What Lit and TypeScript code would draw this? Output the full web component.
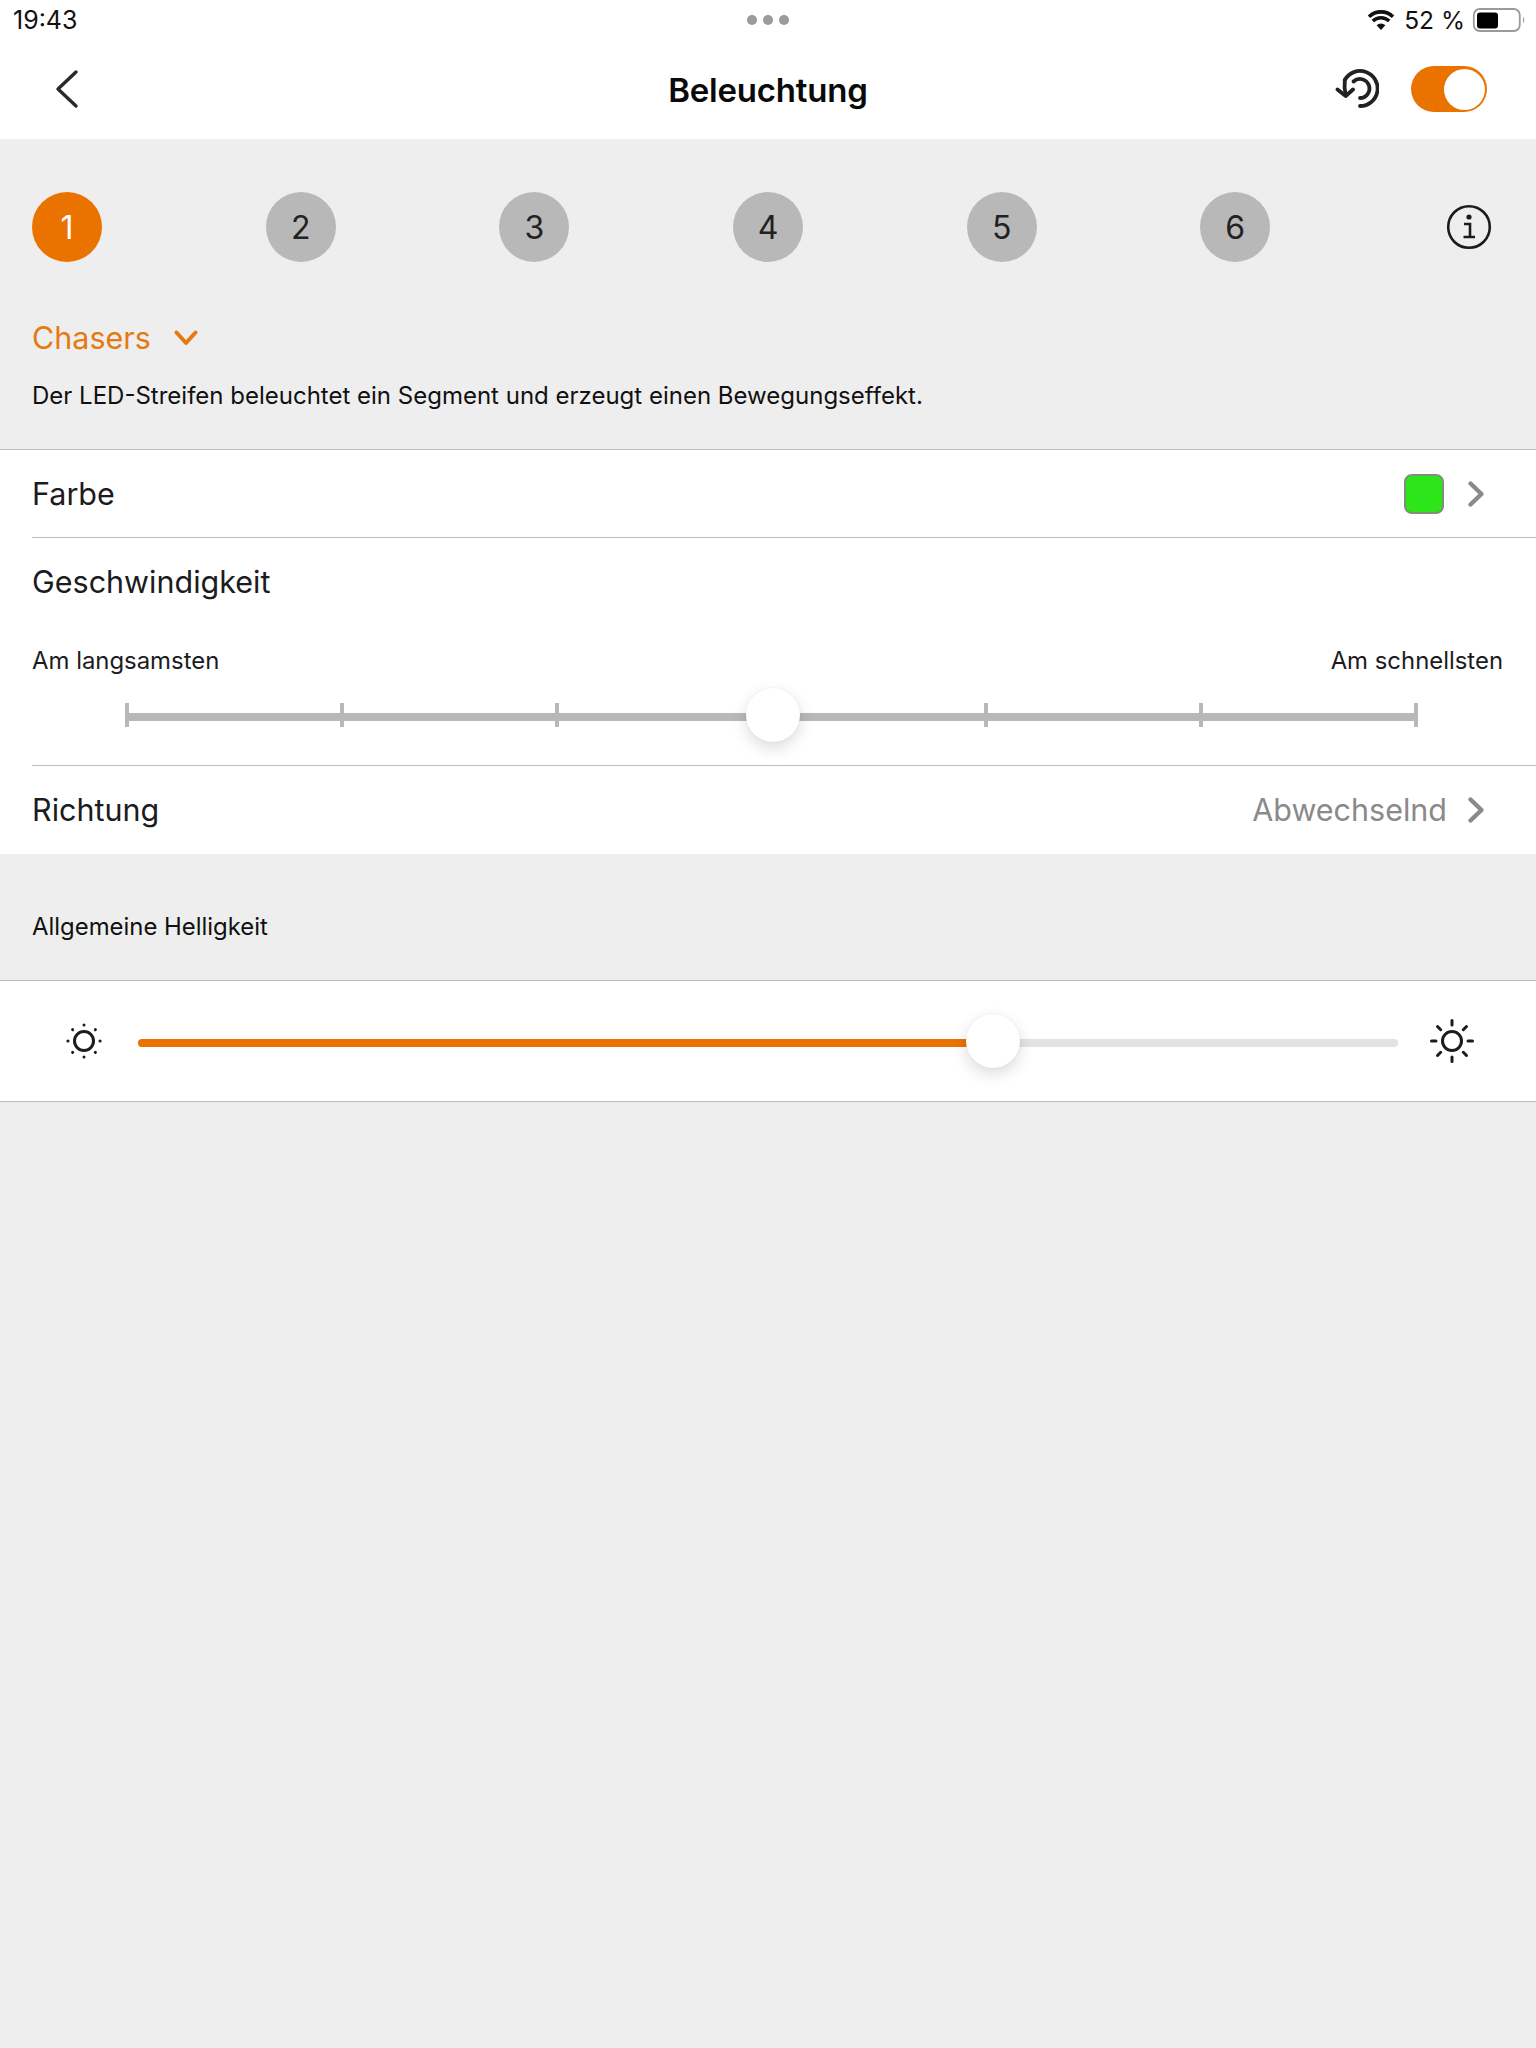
import { LitElement, html, css, svg } from 'lit';
import { customElement, property } from 'lit/decorators.js';

const chevronRight = html`<svg width="20" height="28" viewBox="0 0 20 28">
  <path d="M3.5 3.5 L14.5 14 L3.5 24.5" fill="none" stroke="#8a8a8a" stroke-width="4.4" stroke-linecap="round" stroke-linejoin="round"/>
</svg>`;

// sun rays for the brightness icons, dots for the dim one, dashes for the bright one
function rays(inner: number, outer: number, width: number) {
  return [0, 45, 90, 135, 180, 225, 270, 315].map(
    (a) => svg`<line x1="24" y1=${24 - inner} x2="24" y2=${24 - outer} transform="rotate(${a} 24 24)"
      stroke="#1c1c1e" stroke-width=${width} stroke-linecap="round"/>`
  );
}

@customElement('app-root')
export class AppRoot extends LitElement {
  static styles = css`
    :host {
      display: block;
      width: 1536px;
      height: 2048px;
      background: #eeeeee;
      color: #1c1c1e;
      font-family: Inter, 'Liberation Sans', sans-serif;
      overflow: hidden;
    }

    .top {
      background: #fff;
      height: 139px;
      display: flex;
      flex-direction: column;
    }

    .status {
      height: 39px;
      padding: 0 10px 0 13px;
      display: flex;
      align-items: center;
      position: relative;
      font-size: 25px;
      color: #111;
    }

    .status .right {
      margin-left: auto;
      display: flex;
      align-items: center;
    }

    .pct {
      font-size: 24.5px;
      margin-left: 9px;
      margin-right: 7px;
    }

    .dots {
      position: absolute;
      left: 747px;
      top: 15px;
      display: flex;
      gap: 6px;
    }

    .dots span {
      width: 10px;
      height: 10px;
      border-radius: 50%;
      background: #9b9b9b;
    }

    .nav {
      flex: 1;
      display: flex;
      align-items: center;
      padding: 0 49px 0 54px;
      position: relative;
    }

    .title {
      position: absolute;
      left: 0;
      right: 0;
      top: 31px;
      text-align: center;
      font-size: 33px;
      font-weight: 600;
      letter-spacing: -0.2px;
      color: #0a0a0a;
    }

    .nav .actions {
      margin-left: auto;
      display: flex;
      align-items: center;
      gap: 32px;
    }

    .toggle {
      width: 76px;
      height: 46px;
      border-radius: 23px;
      background: #ea7300;
      position: relative;
    }

    .toggle::after {
      content: '';
      position: absolute;
      right: 2px;
      top: 2.5px;
      width: 41px;
      height: 41px;
      border-radius: 50%;
      background: #fff;
    }

    .head {
      padding: 53px 32px 0;
      height: 310px;
      box-sizing: border-box;
    }

    .steps {
      display: flex;
      align-items: center;
      justify-content: space-between;
    }

    .step {
      width: 70px;
      height: 70px;
      border-radius: 50%;
      background: #b8b8b8;
      display: flex;
      align-items: center;
      justify-content: center;
      font-size: 32px;
      color: #222;
    }

    .step.on {
      background: #ea7300;
      color: #fff;
    }

    .info {
      width: 70px;
      display: flex;
      justify-content: center;
    }

    .mode {
      margin-top: 53px;
      display: flex;
      align-items: center;
      gap: 23px;
      font-size: 30.5px;
      color: #e67a12;
      line-height: 46px;
    }

    .desc {
      margin-top: 19px;
      font-size: 24px;
      line-height: 32px;
      color: #111;
    }

    .group {
      background: #fff;
      border-top: 1px solid #bdbdbd;
    }

    .row {
      height: 87px;
      display: flex;
      align-items: center;
      margin-left: 32px;
      padding-right: 49px;
      font-size: 30.5px;
    }

    .row.last {
      height: 88px;
      padding-bottom: 1px;
      box-sizing: border-box;
    }

    .row .end {
      margin-left: auto;
      display: flex;
      align-items: center;
      gap: 23px;
      color: #8a8a8a;
    }

    .row .val {
      margin-right: -3px;
    }

    .sep {
      margin-left: 32px;
      height: 1px;
      background: #bdbdbd;
    }

    .swatch {
      width: 40px;
      height: 40px;
      box-sizing: border-box;
      border-radius: 8px;
      background: #2ee51a;
      border: 2px solid #7f8f7c;
    }

    .speed {
      height: 227px;
      box-sizing: border-box;
      padding: 24px 33px 0 32px;
    }

    .speed h3 {
      margin: 0;
      font-size: 30.5px;
      font-weight: 400;
      line-height: 40px;
    }

    .ends {
      margin-top: 43px;
      display: flex;
      justify-content: space-between;
      font-size: 23.9px;
      line-height: 32px;
    }

    .track {
      position: relative;
      height: 8px;
      background: #b8b8b8;
      margin: 36px 87px 0 95px;
    }

    .tick {
      position: absolute;
      top: -10px;
      width: 4px;
      height: 24px;
      margin-left: -2px;
      background: #b8b8b8;
    }

    .thumb {
      position: absolute;
      top: 50%;
      width: 54px;
      height: 54px;
      margin: -29px 0 0 -27px;
      border-radius: 50%;
      background: #fff;
      box-shadow: 0 6px 16px rgba(0, 0, 0, 0.14), 0 0 3px rgba(0, 0, 0, 0.05);
    }

    .section {
      height: 126px;
      box-sizing: border-box;
      padding: 57px 32px 0;
      font-size: 23.9px;
      line-height: 32px;
      color: #111;
    }

    .bright {
      background: #fff;
      border-top: 1px solid #bdbdbd;
      border-bottom: 1px solid #bdbdbd;
      height: 122px;
      box-sizing: border-box;
      display: flex;
      align-items: center;
      padding: 0 60px;
    }

    .range {
      flex: 1;
      position: relative;
      height: 8px;
      border-radius: 4px;
      background: #e3e3e6;
      margin: 4px 30px 0;
    }

    .range .fill {
      height: 100%;
      border-radius: 4px 0 0 4px;
      background: #ea7300;
    }
  `;

  @property({ type: Number }) active = 1;

  render() {
    return html`
      <div class="top">
        <div class="status">
          <span>19:43</span>
          <div class="dots"><span></span><span></span><span></span></div>
          <div class="right">
            <svg width="28" height="22" viewBox="0 0 28 22">
              <path d="M14 21 L9.6 16.2 A6.4 6.4 0 0 1 18.4 16.2 Z" fill="#111"/>
              <path d="M5.8 12 A11.8 11.8 0 0 1 22.2 12" fill="none" stroke="#111" stroke-width="3.6"/>
              <path d="M2 7.8 A17.2 17.2 0 0 1 26 7.8" fill="none" stroke="#111" stroke-width="3.6"/>
            </svg>
            <span class="pct">52 %</span>
            <svg width="54" height="24" viewBox="0 0 54 24">
              <rect x="1.8" y="1" width="46" height="22" rx="6" fill="none" stroke="#9a9a9a" stroke-width="1.8"/>
              <rect x="5" y="4.5" width="21" height="16" rx="3" fill="#000"/>
              <path d="M51 8.5 Q53.5 12 51 15.5 Z" fill="#9a9a9a"/>
            </svg>
          </div>
        </div>
        <div class="nav">
          <svg width="26" height="40" viewBox="0 0 26 40">
            <path d="M22 3 L4 20 L22 37" fill="none" stroke="#2a2a2a" stroke-width="3.4" stroke-linecap="round" stroke-linejoin="round"/>
          </svg>
          <div class="title">Beleuchtung</div>
          <div class="actions">
            <svg width="44" height="40" viewBox="0 0 44 40">
              <g fill="none" stroke="#222" stroke-width="3.8" stroke-linecap="round" stroke-linejoin="round">
                <path d="M9.8 11 A17.5 17.5 0 1 1 25 37"/>
                <path d="M18.5 12.5 A9.5 9.5 0 1 1 25 29"/>
                <path d="M9.8 11 Q9 19 10.7 26"/>
                <path d="M2.5 20.5 L10.7 27 L18 20.5"/>
              </g>
            </svg>
            <div class="toggle"></div>
          </div>
        </div>
      </div>

      <div class="head">
        <div class="steps">
          ${[1, 2, 3, 4, 5, 6].map(
            (n) => html`<div class="step ${n === this.active ? 'on' : ''}">${n}</div>`
          )}
          <div class="info">
            <svg width="46" height="46" viewBox="0 0 46 46">
              <circle cx="23" cy="23" r="20.8" fill="none" stroke="#1c1c1e" stroke-width="2.6"/>
              <circle cx="23" cy="13" r="2.6" fill="#1c1c1e"/>
              <path d="M18 20 H24 V32 M17.5 33 H29" fill="none" stroke="#1c1c1e" stroke-width="2.6"/>
            </svg>
          </div>
        </div>
        <div class="mode">
          <span>Chasers</span>
          <svg width="24" height="17" viewBox="0 0 24 17">
            <path d="M2.5 2.5 L12 13 L21.5 2.5" fill="none" stroke="#e67a12" stroke-width="4" stroke-linecap="round" stroke-linejoin="round"/>
          </svg>
        </div>
        <div class="desc">Der LED-Streifen beleuchtet ein Segment und erzeugt einen Bewegungseffekt.</div>
      </div>

      <div class="group">
        <div class="row">
          Farbe
          <div class="end"><div class="swatch"></div>${chevronRight}</div>
        </div>
        <div class="sep"></div>
        <div class="speed">
          <h3>Geschwindigkeit</h3>
          <div class="ends"><span>Am langsamsten</span><span>Am schnellsten</span></div>
          <div class="track">
            ${[0, 16.67, 33.33, 66.67, 83.33, 100].map(
              (p) => html`<div class="tick" style="left:${p}%"></div>`
            )}
            <div class="thumb" style="left:50.1%"></div>
          </div>
        </div>
        <div class="sep"></div>
        <div class="row last">
          Richtung
          <div class="end"><span class="val">Abwechselnd</span>${chevronRight}</div>
        </div>
      </div>

      <div class="section">Allgemeine Helligkeit</div>

      <div class="bright">
        <svg width="48" height="48" viewBox="0 0 48 48">
          <circle cx="24" cy="24" r="9.5" fill="none" stroke="#1c1c1e" stroke-width="3"/>
          ${rays(16, 16.1, 3)}
        </svg>
        <div class="range">
          <div class="fill" style="width:67.86%"></div>
          <div class="thumb" style="left:67.86%"></div>
        </div>
        <svg width="48" height="48" viewBox="0 0 48 48">
          <circle cx="24" cy="24" r="9.5" fill="none" stroke="#1c1c1e" stroke-width="3"/>
          ${rays(16, 20.5, 3)}
        </svg>
      </div>
    `;
  }
}
